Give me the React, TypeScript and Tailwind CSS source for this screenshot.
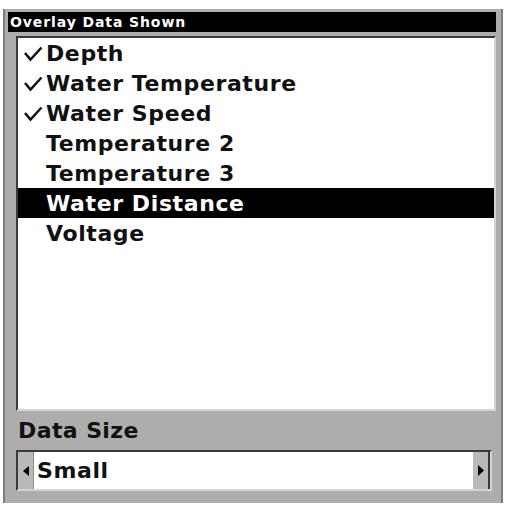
import React from 'react';

const items = [
  { label: 'Depth', checked: true },
  { label: 'Water Temperature', checked: true },
  { label: 'Water Speed', checked: true },
  { label: 'Temperature 2', checked: false },
  { label: 'Temperature 3', checked: false },
  { label: 'Water Distance', checked: false, selected: true },
  { label: 'Voltage', checked: false },
];

function Check() {
  return (
    <svg width="19" height="16" viewBox="0 0 19 16" className="shrink-0">
      <path d="M1 7 L6.5 13.5 L17.5 1.5" fill="none" stroke="currentColor" strokeWidth="2.5" />
    </svg>
  );
}

export default function App() {
  return (
    <div className="h-[506px] w-[506px] bg-white pl-[3px] pt-[9px] font-['DejaVu_Sans',sans-serif]">
      <div className="flex h-[494px] w-[500px] flex-col border-x-2 border-[#7c7c7c] bg-[#adadad] pl-[3px] pr-[5px] pt-[3px]">
        {/* Title bar */}
        <div className="flex h-[20px] items-center bg-black pl-[2px] text-[14px] font-bold tracking-[0.9px] text-white">
          Overlay Data Shown
        </div>

        {/* List */}
        <div className="ml-[8px] mt-[4px] h-[375px] border-2 border-b-[#d4d4d4] border-l-[#3a3a3a] border-r-[#d4d4d4] border-t-[#3a3a3a] bg-white">
          {items.map((item) => (
            <div
              key={item.label}
              className={`flex h-[30px] items-center text-[22px] font-bold tracking-[0.6px] ${
                item.selected ? 'bg-black text-white' : 'text-[#111]'
              }`}
            >
              <div className="flex w-[28px] justify-end pr-[3px] pt-[2px]">{item.checked && <Check />}</div>
              <span>{item.label}</span>
            </div>
          ))}
        </div>

        {/* Data Size */}
        <div className="ml-[10px] mt-[7px] text-[22px] font-bold leading-[26px] tracking-[0.4px] text-[#111]">Data Size</div>
        <div className="ml-[8px] mr-[4px] mt-[6px] flex h-[41px] border-2 border-b-[#d4d4d4] border-l-[#3a3a3a] border-r-[#d4d4d4] border-t-[#3a3a3a] bg-white">
          <div className="flex w-[16px] items-center justify-center border-r border-[#8a8a8a] bg-[#b9b9b9]">
            <svg width="6" height="10" viewBox="0 0 6 10">
              <path d="M6 0 L0 5 L6 10 Z" fill="black" />
            </svg>
          </div>
          <div className="flex flex-1 items-center pl-[3px] text-[22px] font-bold tracking-[0.6px] text-[#111]">Small</div>
          <div className="flex w-[17px] items-center justify-center border-r-2 border-[#3a3a3a] bg-[#b9b9b9]">
            <svg width="6" height="11" viewBox="0 0 6 11">
              <path d="M0 0 L6 5.5 L0 11 Z" fill="black" />
            </svg>
          </div>
        </div>
      </div>
    </div>
  );
}
